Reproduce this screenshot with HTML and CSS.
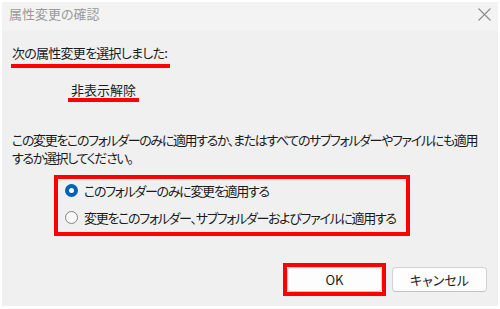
FILE: index.html
```html
<!DOCTYPE html>
<html lang="ja">
<head>
    <meta charset="UTF-8">
    <title>属性変更の確認</title>
    <link rel="stylesheet" href="styles.css">
</head>
<body>
    <div class="dialog">
        <div class="titlebar">
            <span class="title">属性変更の確認</span>
            <svg class="close" width="13" height="13" viewBox="0 0 13 13">
                <path d="M0.5 0.5 L12.5 12.5 M12.5 0.5 L0.5 12.5" stroke="#8c8c8c" stroke-width="1.1" fill="none"/>
            </svg>
        </div>
        <div class="content">
            <div><span class="mark lead">次の属性変更を選択しました:</span></div>
            <div><span class="mark attr">非表示解除</span></div>
            <p class="desc">この変更をこのフォルダーのみに適用するか、またはすべてのサブフォルダーやファイルにも適用<br>するか選択してください。</p>
            <div class="options">
                <label class="option"><span class="radio checked"></span>このフォルダーのみに変更を適用する</label>
                <label class="option"><span class="radio"></span>変更をこのフォルダー、サブフォルダーおよびファイルに適用する</label>
            </div>
            <div class="buttons">
                <div class="ok-wrap"><button class="btn">OK</button></div>
                <button class="btn">キャンセル</button>
            </div>
        </div>
    </div>
</body>
</html>
```

FILE: styles.css
```css
body {
    margin: 0;
    background: #ffffff;
    font-family: "Noto Sans CJK JP", sans-serif;
    font-feature-settings: "palt";
    font-size: 13px;
    color: #1b1b1b;
}
.dialog {
    margin: 2px;
    width: 496px;
    height: 304px;
    background: #f0f0f0;
    overflow: hidden;
}
.titlebar {
    height: 29px;
    background: #f3f3f3;
    display: flex;
    justify-content: space-between;
    align-items: flex-start;
    padding: 3px 7px 0 7px;
    box-sizing: border-box;
}
.title {
    color: #9a9a9a;
    line-height: 18px;
}
.close {
    margin-top: 3px;
}
.content {
    padding: 12px 0 0 9px;
}
.mark {
    display: inline-block;
    line-height: 18px;
    border-bottom: 4px solid #ff0000;
}
.lead {
    padding: 0 3px 2px 1px;
    letter-spacing: -0.75px;
}
.attr {
    margin: 13px 0 0 57px;
    line-height: 17px;
    padding: 0 3px;
}
.desc {
    margin: 29px 0 0 1px;
    line-height: 18px;
    white-space: nowrap;
    letter-spacing: -1.35px;
}
.options {
    margin: 8px 0 0 43px;
    width: 356px;
    box-sizing: border-box;
    border: 4px solid #ff0000;
    padding: 2px 0 5px 7px;
    display: flex;
    flex-direction: column;
    gap: 8px;
    white-space: nowrap;
    letter-spacing: -1.3px;
}
.option {
    display: flex;
    align-items: center;
    gap: 6px;
    line-height: 19px;
}
.radio {
    width: 11px;
    height: 11px;
    border: 1px solid #858585;
    border-radius: 50%;
    background: #f7f7f7;
}
.radio.checked {
    width: 5px;
    height: 5px;
    border: 4px solid #005fb8;
    background: #ffffff;
}
.buttons {
    margin: 27px 11px 0 0;
    display: flex;
    justify-content: flex-end;
    align-items: center;
    gap: 6px;
}
.ok-wrap {
    border: 4px solid #ff0000;
    display: flex;
}
.btn {
    width: 95px;
    height: 25px;
    font: inherit;
    color: #1b1b1b;
    background: #fdfdfd;
    border: 1px solid #d3d3d3;
    border-bottom-color: #c2c2c2;
    border-radius: 4px;
    padding: 0;
}
```
